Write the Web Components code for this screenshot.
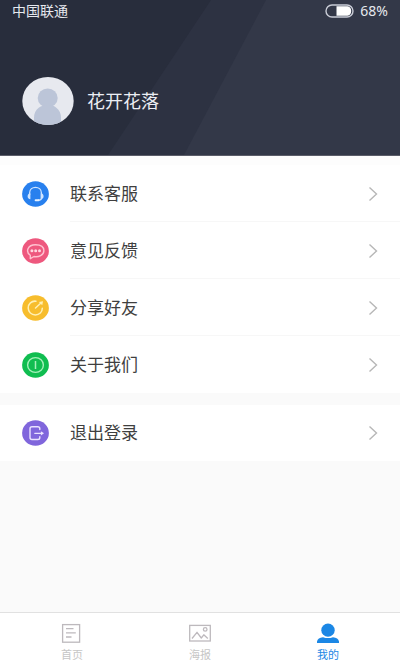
<!DOCTYPE html>
<html lang="zh-CN">
<head>
<meta charset="utf-8">
<meta name="viewport" content="width=device-width, initial-scale=1">
<title>我的</title>
<style>
html, body { margin: 0; height: 100%; }
body { font-family: "Noto Sans", "Noto Sans CJK SC", sans-serif; background: #fafafa; color: #3f3f3f; }
</style>
</head>
<body>
<profile-page></profile-page>
<script>
const define = (name, html) => customElements.define(name, class extends HTMLElement {
  constructor() {
    super();
    const t = document.createElement('template');
    t.innerHTML = html;
    this.attachShadow({ mode: 'open' }).append(t.content.cloneNode(true));
  }
});

define('status-bar', `
<style>
:host { display: flex; justify-content: space-between; align-items: center; height: 22px; padding: 0 12px; font-size: 14px; line-height: 20px; color: #e6e8ee; }
.battery { display: flex; align-items: center; gap: 6px; }
svg { display: block; }
</style>
<span>中国联通</span>
<span class="battery">
<svg width="29" height="14" viewBox="0 0 29 14" aria-hidden="true"><rect x="1" y="1" width="27" height="12" rx="6" fill="none" stroke="#c9ccd6" stroke-width="1.4"/><path d="M11.5 2.3H22.5Q26.2 3 26.2 7T22.5 11.7H11.5Z" fill="#fff"/></svg>
<span>68%</span></span>`);

define('profile-header', `
<style>
:host { display: block; position: relative; height: 156px; background: #282d3c; overflow: hidden; box-sizing: border-box; border-bottom: 1px solid #5b5d69; }
.bands { position: absolute; inset: 0; width: 100%; height: 100%; }
.content { position: relative; }
.user { display: flex; align-items: center; gap: 13px; padding: 55px 22px 0; color: #eceef4; font-size: 18px; line-height: 26px; }
.user svg { display: block; }
h1 { font: inherit; margin: 0; }
</style>
<svg class="bands" viewBox="0 0 400 156" preserveAspectRatio="none" aria-hidden="true"><path d="M211 0H400V156H108Z" fill="#2d3242"/><path d="M266 0H400V156H184Z" fill="#333848"/></svg>
<div class="content">
<status-bar></status-bar>
<div class="user">
<svg width="52" height="48" viewBox="0 0 52 48" aria-hidden="true">
<defs><clipPath id="c"><ellipse cx="26" cy="24" rx="25.7" ry="24"/></clipPath></defs>
<g clip-path="url(#c)"><rect width="52" height="48" fill="#e7e9ef"/><ellipse cx="25.7" cy="21" rx="10" ry="9.5" fill="#bcc5d8"/><path d="M12 48V41Q12 34 17 30.5Q20 28 26 28T34 30.5Q39 34 39 41V48Z" fill="#bcc5d8"/></g></svg>
<h1><slot></slot></h1>
</div></div>`);

define('menu-row', `
<style>
:host { display: block; background: #fff; }
button { display: flex; align-items: stretch; width: 100%; height: 57px; padding: 0 0 0 22px; gap: 21px; border: 0; background: none; font: inherit; font-size: 17px; line-height: 24px; color: inherit; text-align: left; cursor: pointer; }
:host([single]) button { height: 56px; }
.icon { display: flex; align-items: center; }
.main { flex: 1; display: flex; align-items: center; justify-content: space-between; padding: 2px 22px 0 0; border-bottom: 1px solid #f7f7f7; }
:host([last]) .main { border-color: transparent; }
:host([single]) .main { padding-top: 0; }
svg { display: block; }
</style>
<button type="button"><span class="icon"><slot name="icon"></slot></span><span class="main"><span><slot></slot></span>
<svg width="10" height="16" viewBox="0 0 10 16" fill="none" stroke="#b7b7b7" stroke-width="1.4" aria-hidden="true"><path d="M1.5 1.5L8.5 8L1.5 14.5"/></svg></span></button>`);

define('menu-group', `
<style>
:host { display: block; background: #fdfdfd; }
</style><slot></slot>`);

define('tab-item', `
<style>
:host { display: block; flex: 1; color: #c6c6c6; }
:host([current]) { color: #1b87e5; }
a { display: flex; flex-direction: column; align-items: center; gap: 3px; padding-top: 9px; color: inherit; text-decoration: none; font-size: 11px; line-height: 16px; }
</style>
<a href="#"><slot name="icon"></slot><span><slot></slot></span></a>`);

define('tab-bar', `
<style>
:host { display: flex; height: 54px; padding: 0 8px; box-sizing: border-box; background: #fff; border-top: 1px solid #e1e1e1; }
</style><slot></slot>`);

define('profile-page', `
<style>
:host { display: flex; flex-direction: column; min-height: 100vh; }
main { flex: 1; }
.first { padding-top: 9px; }
.second { margin-top: 12px; }
svg { display: block; }
</style>
<profile-header>花开花落</profile-header>
<main>
<menu-group class="first">
<menu-row><svg slot="icon" width="27" height="26" viewBox="0 0 27 26" fill="none" aria-hidden="true"><ellipse cx="13.5" cy="13" rx="13.4" ry="12.7" fill="#2880ee"/><path d="M7.6 14V12C7.6 4.6 19.4 4.6 19.4 12V17.4Q19.4 19.2 16 19.2" stroke="#cfe4ff" stroke-width="1.3"/><path d="M8.4 12.2Q5.6 12.6 5.6 15.3T8.4 18.2ZM18.8 12.2Q21.6 12.6 21.6 15.3T18.8 18.2Z" fill="#cfe4ff"/><path d="M13.6 19.3H16.6" stroke="#e6f1ff" stroke-width="1.9" stroke-linecap="round"/></svg>联系客服</menu-row>
<menu-row><svg slot="icon" width="27" height="26" viewBox="0 0 27 26" fill="none" aria-hidden="true"><ellipse cx="13.5" cy="13" rx="13.4" ry="12.7" fill="#ee587e"/><path d="M8.3 17.3C3.3 13.8 5.5 6.8 13.5 6.8C19.3 6.8 21.9 9.6 21.9 12.8C21.9 17 16.5 19.5 12 18.5L8.3 20.7Z" stroke="#ffc2d0" stroke-width="1.4" stroke-linejoin="round"/><g fill="#ffd9e1"><circle cx="9.9" cy="12.7" r="1.5"/><circle cx="13.7" cy="12.7" r="1.5"/><circle cx="17.5" cy="12.7" r="1.5"/></g></svg>意见反馈</menu-row>
<menu-row><svg slot="icon" width="27" height="26" viewBox="0 0 27 26" fill="none" aria-hidden="true"><ellipse cx="13.5" cy="13" rx="13.4" ry="12.7" fill="#f7bd2d"/><g stroke="#fff0b4" stroke-width="1.5" stroke-linecap="round"><path d="M14 6.2C9.5 5.6 6.2 9 6.2 13C6.2 17 9.5 19.9 13.3 19.9C17.4 19.9 20.3 17 20.3 13.2"/><path d="M13.5 13L19.2 7.8"/></g><path d="M16.8 6.9L21 6.2L20.3 10.3Z" fill="#fff0b4"/></svg>分享好友</menu-row>
<menu-row last><svg slot="icon" width="27" height="26" viewBox="0 0 27 26" fill="none" aria-hidden="true"><ellipse cx="13.5" cy="13" rx="13.4" ry="12.7" fill="#10bd50"/><ellipse cx="13.5" cy="13" rx="7.9" ry="7.4" stroke="#a5f0ba" stroke-width="1.4"/><path d="M13.5 9V17" stroke="#a5f0ba" stroke-width="1.5"/></svg>关于我们</menu-row>
</menu-group>
<menu-group class="second">
<menu-row last single><svg slot="icon" width="27" height="26" viewBox="0 0 27 26" fill="none" aria-hidden="true"><ellipse cx="13.5" cy="13" rx="13.4" ry="12.7" fill="#8066dc"/><path d="M17.8 9.5V8.6Q17.8 6.8 15.8 6.8H10Q8 6.8 8 8.8V17.5Q8 19.5 10 19.5H15.8Q17.8 19.5 17.8 17.7V16.8" stroke="#eae3ff" stroke-width="1.4" stroke-linecap="round"/><path d="M12.8 13.3H20" stroke="#eae3ff" stroke-width="1.3" stroke-linecap="round"/><path d="M18.9 11.2L22 13.3L18.9 15.4Z" fill="#eae3ff"/></svg>退出登录</menu-row>
</menu-group>
</main>
<tab-bar>
<tab-item><svg slot="icon" width="22" height="22" viewBox="0 0 22 22" fill="none" stroke="#bdb9bd" stroke-width="1.3" aria-hidden="true"><rect x="1.6" y="2.6" width="17" height="17.6"/><path d="M5 6.6H12.5M5 10.8H14.8M5 15H10.5"/></svg>首页</tab-item>
<tab-item><svg slot="icon" width="22" height="22" viewBox="0 0 22 22" fill="none" stroke="#bdb9bd" stroke-width="1.3" aria-hidden="true"><rect x=".7" y="3.4" width="20.6" height="15.6"/><circle cx="16.2" cy="7.4" r="1.8"/><path d="M3 16.5L8 10.3L12.3 16L14.8 12.8L18.8 16.5" stroke-linejoin="round"/></svg>海报</tab-item>
<tab-item current><svg slot="icon" width="22" height="22" viewBox="0 0 22 22" fill="#1b87e5" aria-hidden="true"><ellipse cx="11" cy="8.2" rx="6.7" ry="6.6"/><path d="M0 21V19.5Q.8 15.5 6 15.2Q11 17 16 15.2Q21.2 15.5 22 19.5V21Z"/></svg>我的</tab-item>
</tab-bar>`);
</script>
</body>
</html>
